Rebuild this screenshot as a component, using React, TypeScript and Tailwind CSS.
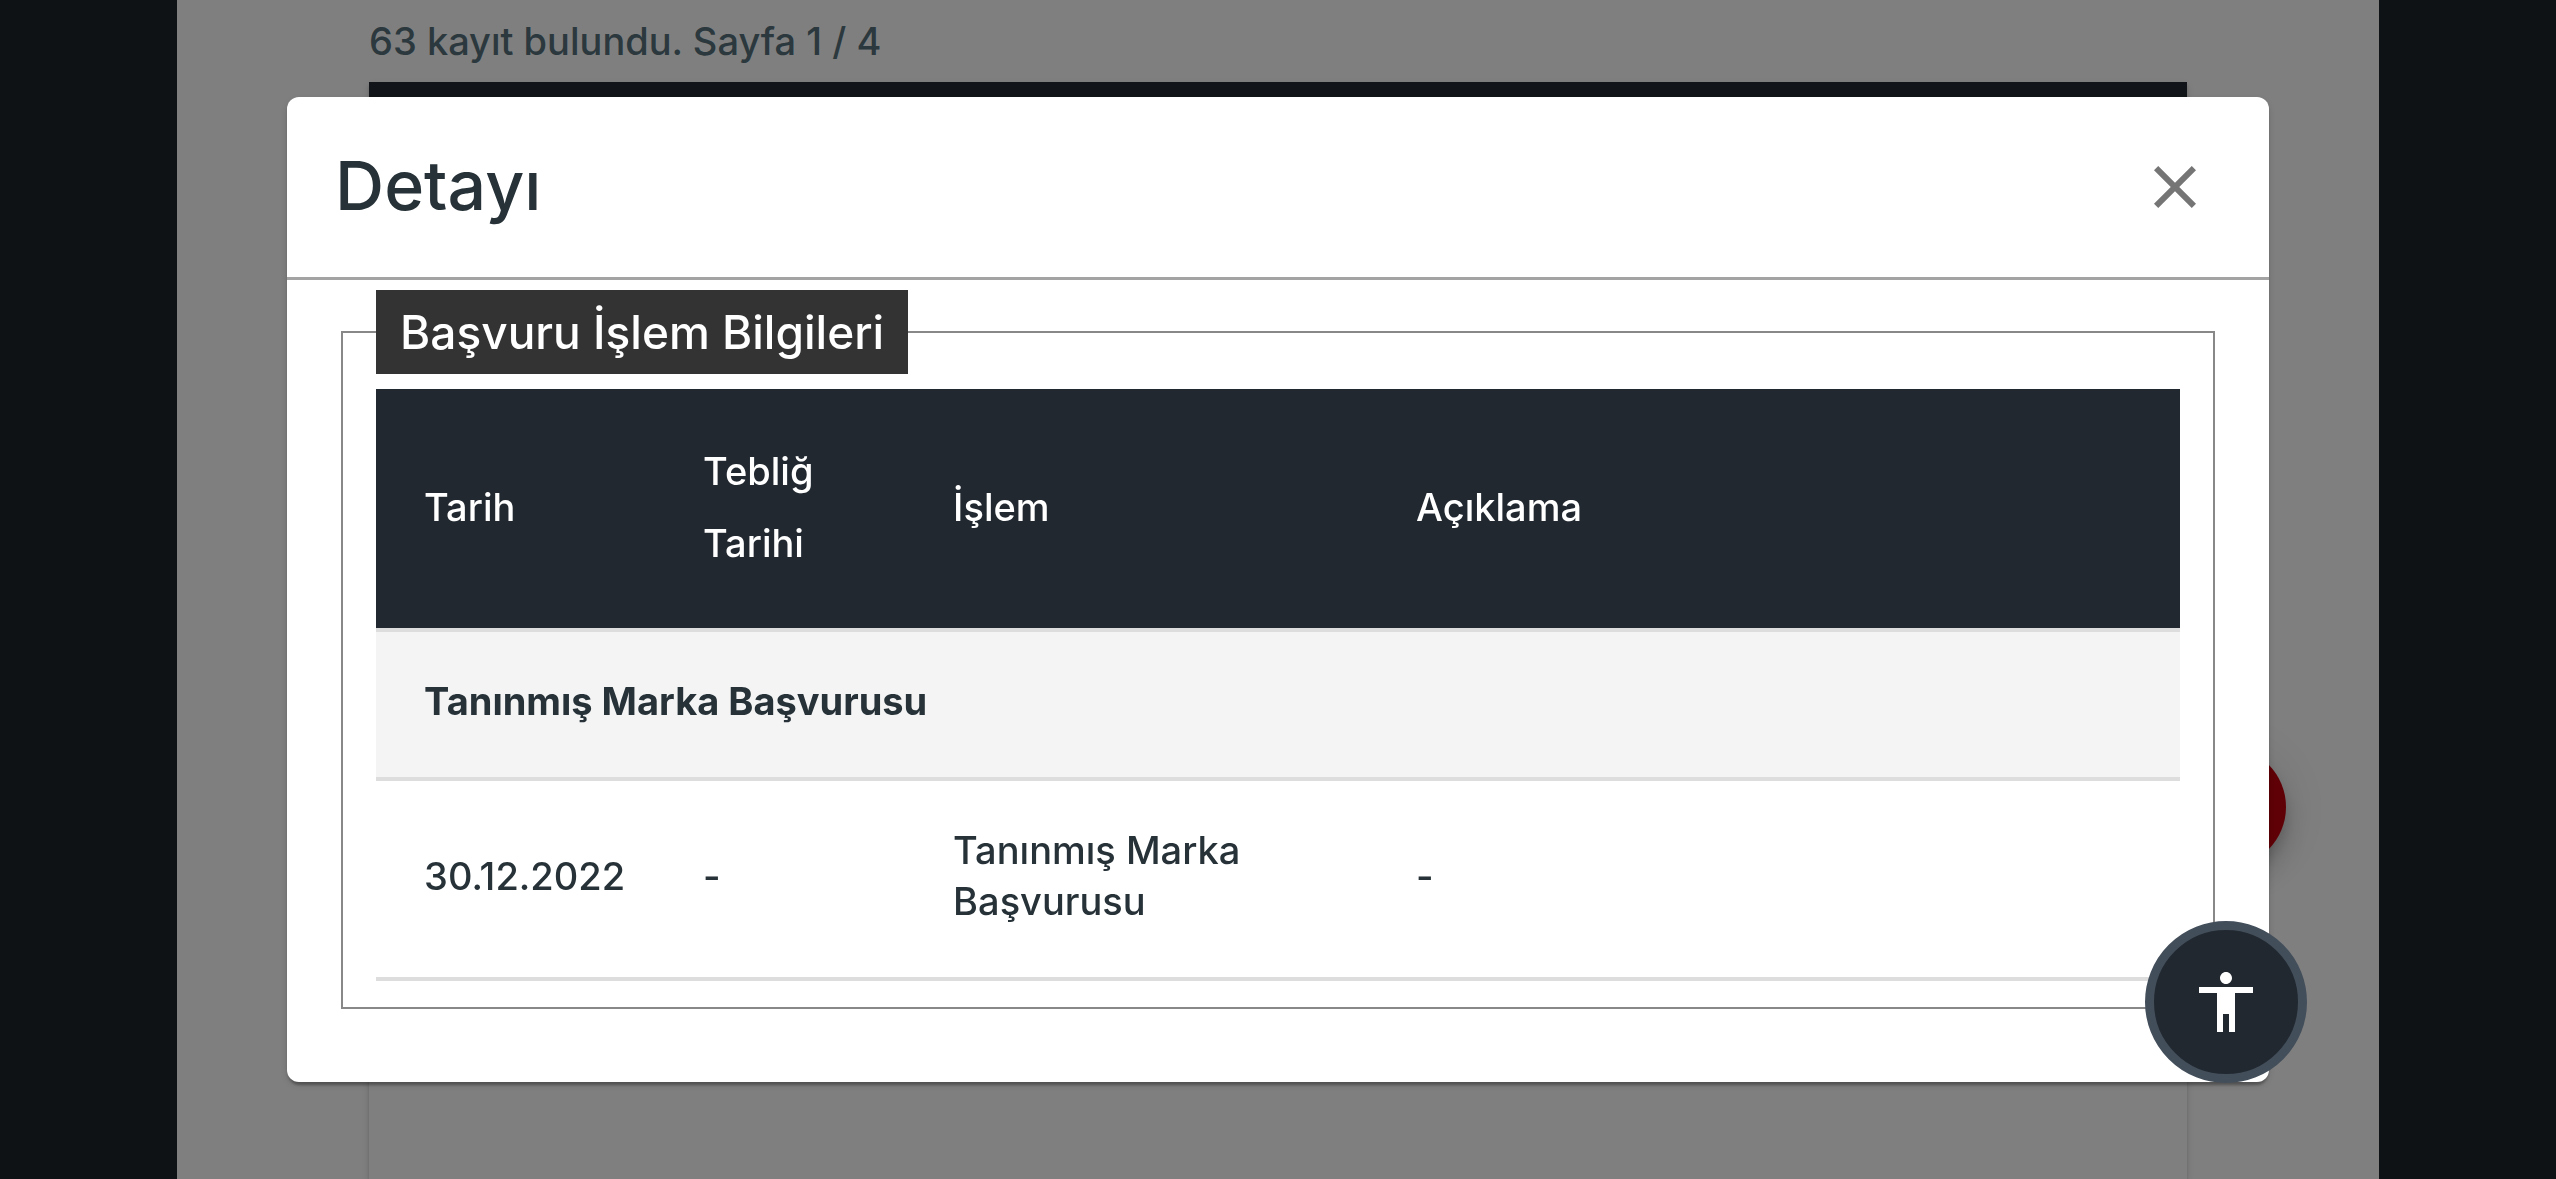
import { useState } from "react";
import { MdAccessibility, MdClose } from "react-icons/md";

type Row = {
  date: string;
  notified: string;
  action: string;
  note: string;
};

const rows: Row[] = [
  { date: "30.12.2022", notified: "-", action: "Tanınmış Marka Başvurusu", note: "-" },
];

function Results() {
  return (
    <main className="flex h-screen flex-col overflow-hidden bg-[#1c242a] px-[177px]">
      <div className="flex flex-1 flex-col bg-white px-48">
        <p className="py-[5px] text-[38px] leading-[72px] text-[#56707a]">63 kayıt bulundu. Sayfa 1 / 4</p>
        <div className="flex-1 bg-white shadow-[0_3px_3px_rgba(0,0,0,0.14),0_3px_9px_rgba(0,0,0,0.12)]">
          <div className="h-60 bg-[#222930]" />
        </div>
      </div>
    </main>
  );
}

function DetailTable() {
  return (
    <table className="w-full table-fixed text-left text-[38px]">
      <colgroup>
        <col className="w-[279px]" />
        <col className="w-[250px]" />
        <col className="w-[463px]" />
        <col />
      </colgroup>
      <thead>
        <tr className="border-b-4 border-[#dddddd] bg-[#212830] leading-[72px] text-white">
          <th className="px-12 pt-[46px] pb-[49px] font-medium">Tarih</th>
          <th className="px-12 pt-[46px] pb-[49px] font-medium">Tebliğ Tarihi</th>
          <th className="px-12 pt-[46px] pb-[49px] font-medium">İşlem</th>
          <th className="px-12 pt-[46px] pb-[49px] font-medium">Açıklama</th>
        </tr>
      </thead>
      <tbody className="leading-[51px] text-[#263238]">
        <tr className="border-b-4 border-[#dddddd] bg-[#f4f4f4]">
          <td colSpan={4} className="px-12 pt-11 pb-[50px] font-bold">
            Tanınmış Marka Başvurusu
          </td>
        </tr>
        {rows.map((row) => (
          <tr key={row.date} className="border-b-4 border-[#dddddd]">
            <td className="pt-11 pb-[50px] pl-12">{row.date}</td>
            <td className="px-12 pt-11 pb-[50px]">{row.notified}</td>
            <td className="px-12 pt-11 pb-[50px]">{row.action}</td>
            <td className="px-12 pt-11 pb-[50px]">{row.note}</td>
          </tr>
        ))}
      </tbody>
    </table>
  );
}

function DetailModal({ onClose }: { onClose: () => void }) {
  return (
    <div className="fixed inset-0 flex items-center justify-center bg-black/50 px-[177px]">
      <div
        role="dialog"
        aria-labelledby="detail-title"
        className="w-[90%] rounded-xl bg-white pb-[73px] shadow-[0_6px_3px_-3px_rgba(0,0,0,0.2),0_3px_3px_rgba(0,0,0,0.14),0_3px_9px_rgba(0,0,0,0.12)]"
      >
        <header className="flex items-center justify-between border-b-3 border-[#a3a3a3] px-12 py-[42px]">
          <h2 id="detail-title" className="pb-1 text-[68px] leading-[92px] text-[#263238]">
            Detayı
          </h2>
          <button type="button" aria-label="Kapat" onClick={onClose} className="mr-2.5 text-[#757575]">
            <MdClose className="size-[72px]" />
          </button>
        </header>
        <fieldset className="mx-[54px] mt-2.5 border-2 border-[#888888] px-[33px] pt-[15px] pb-[26px]">
          <legend className="bg-[#333333] px-6 text-[46px] leading-[84px] text-white">
            Başvuru İşlem Bilgileri
          </legend>
          <DetailTable />
        </fieldset>
      </div>
    </div>
  );
}

export default function App() {
  const [open, setOpen] = useState(true);

  return (
    <div className="font-['Inter','Liberation_Sans',sans-serif] font-medium">
      <Results />
      <button
        type="button"
        aria-label="Yukarı çık"
        className="fixed right-[270px] bottom-[312px] size-[120px] rounded-full bg-[#be000c] shadow-[0_9px_15px_-3px_rgba(0,0,0,0.2),0_18px_30px_rgba(0,0,0,0.14),0_3px_54px_rgba(0,0,0,0.12)]"
      />
      {open && <DetailModal onClose={() => setOpen(false)} />}
      <button
        type="button"
        aria-label="Erişilebilirlik"
        className="fixed right-[249px] bottom-24 flex size-[162px] items-center justify-center rounded-full border-[9px] border-[#434e5b] bg-[#212830] text-white"
      >
        <MdAccessibility className="size-[72px]" />
      </button>
    </div>
  );
}
